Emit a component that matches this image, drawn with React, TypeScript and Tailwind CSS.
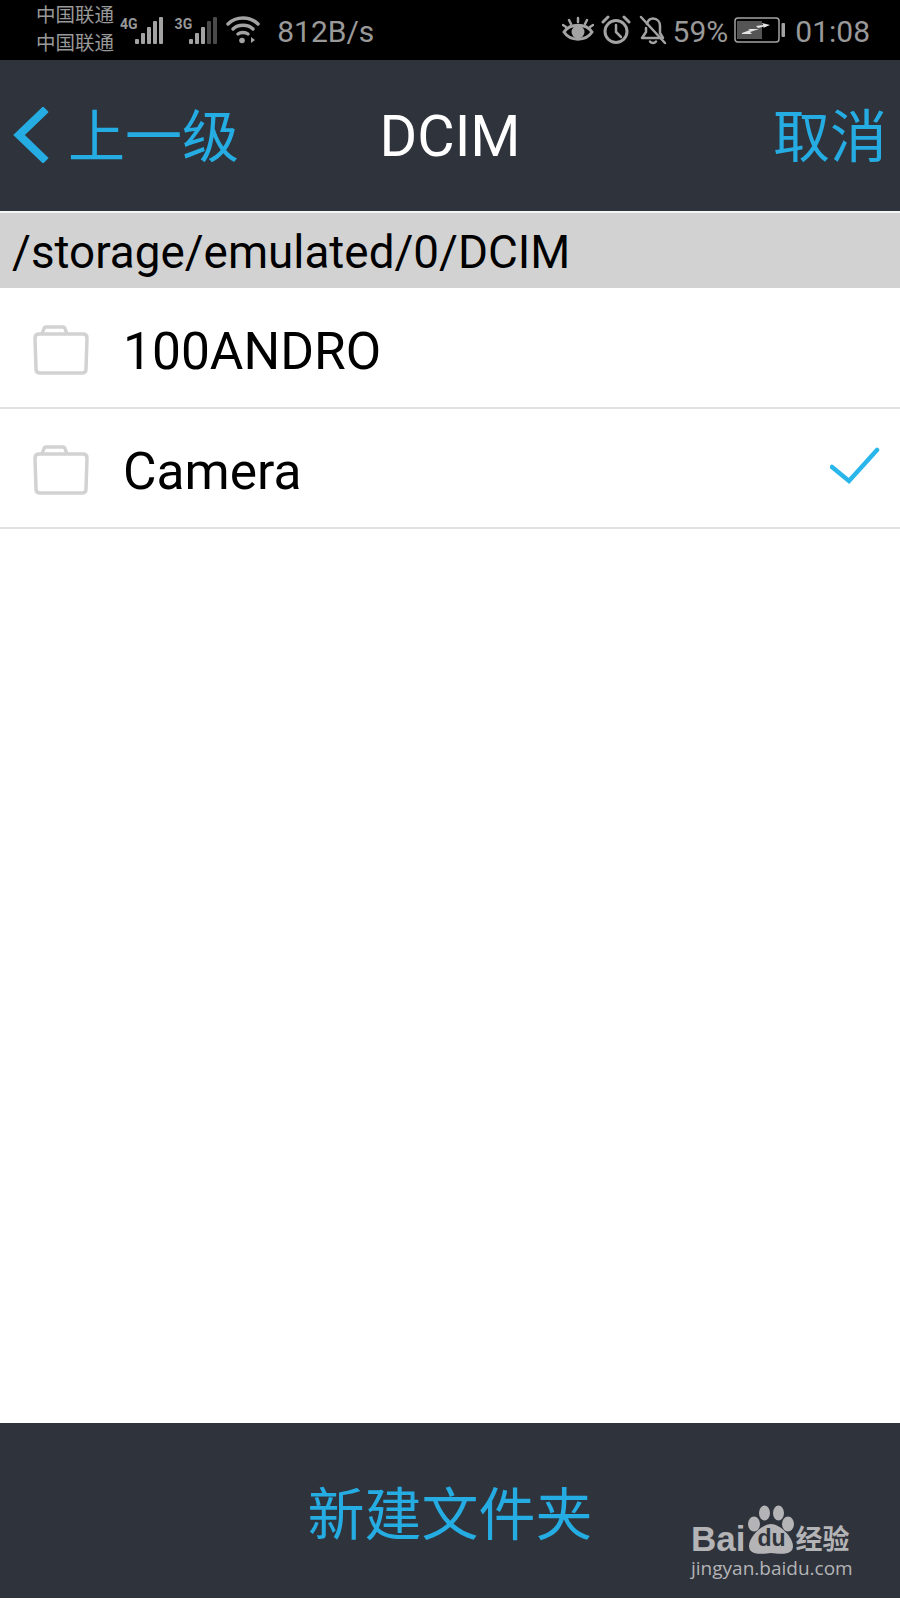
const CJK = "font-['Roboto','Noto_Sans_CJK_SC',sans-serif]"

function SignalBars({ level, className }: { level: number; className?: string }) {
  const heights = [5, 11, 17, 23, 27]
  return (
    <svg width="30" height="28" viewBox="0 0 30 28" className={className}>
      {heights.map((h, i) => (
        <rect
          key={i}
          x={i * 6}
          y={28 - h}
          width="4"
          height={h}
          rx="1"
          fill={i < level ? '#a3a3a3' : '#4a4a4a'}
        />
      ))}
    </svg>
  )
}

function Wifi() {
  return (
    <svg width="34" height="30" viewBox="0 0 34 30" fill="none" stroke="#a3a3a3" strokeWidth="3.500" strokeLinecap="round">
      <path d="M2 9C10 1 24 1 32 9" />
      <path d="M7 14C12 9 22 9 27 14" />
      <path d="M12 19C14.500 17 19.500 17 22 19" />
      <circle cx="16" cy="25.500" r="2.800" fill="#a3a3a3" stroke="none" />
      <path d="M25 22v6l4-3z" fill="#a3a3a3" stroke="none" />
    </svg>
  )
}

function Eye() {
  return (
    <svg width="32" height="28" viewBox="0 0 32 28" fill="none" stroke="#a3a3a3" strokeWidth="3" strokeLinecap="round">
      <path d="M2 16C8 7 24 7 30 16C24 25.500 8 25.500 2 16Z" />
      <circle cx="16" cy="16" r="6.500" fill="#a3a3a3" stroke="none" />
      <path d="M16 2v4M7 4l2 4M25 4l-2 4M1 9l3 2M31 9l-3 2" strokeWidth="2.500" />
    </svg>
  )
}

function Alarm() {
  return (
    <svg width="30" height="30" viewBox="0 0 30 30" fill="none" stroke="#a3a3a3" strokeWidth="3" strokeLinecap="round" strokeLinejoin="round">
      <circle cx="15" cy="16.500" r="11" />
      <path d="M15 10v7l5 5" strokeWidth="2.500" />
      <path d="M2 7l5-5M28 7l-5-5" />
    </svg>
  )
}

function BellOff() {
  return (
    <svg width="28" height="30" viewBox="0 0 28 30" fill="none" stroke="#a3a3a3" strokeWidth="2.500" strokeLinecap="round" strokeLinejoin="round">
      <path d="M8 9C9 5 11 3.500 14 3.500C18.500 3.500 21 7 21 11V18L24 23H3L7 17V13" />
      <path d="M11 26.500C12.500 28.500 15.500 28.500 17 26.500" />
      <path d="M2 2L26 28" />
    </svg>
  )
}

function Battery() {
  return (
    <svg width="52" height="26" viewBox="0 0 52 26" fill="none">
      <rect x="1" y="1" width="44" height="24" rx="3" stroke="#a3a3a3" strokeWidth="1.500" />
      <rect x="3" y="4" width="25" height="18" fill="#555555" />
      <rect x="47.500" y="6" width="3.500" height="14" rx="1" fill="#a3a3a3" />
      <path d="M8 16L16 13L14 12L25 12L16 15L18 17L8 17Z" fill="#e5e5e5" />
      <path d="M22 9L29 8L28 6L36 8L29 11L30 9.500L24 11Z" fill="#e5e5e5" />
    </svg>
  )
}

function Folder() {
  return (
    <svg width="56" height="50" viewBox="0 0 56 50" fill="none" stroke="#d2d2d2" strokeWidth="3.500" strokeLinejoin="round">
      <path d="M9 9L11 3.500C11.300 2.500 12 2 13 2H30C31 2 31.700 2.500 32 3.500L34 9" />
      <path d="M6 9H50C52.500 9 54 10.500 54 13L53 44C53 46.500 51.500 48 49 48H7C4.500 48 3 46.500 3 44L2 13C2 10.500 3.500 9 6 9Z" />
    </svg>
  )
}

function FolderRow({ name, checked }: { name: string; checked?: boolean }) {
  return (
    <div className="flex h-[120px] items-center border-b-2 border-[#e0e2e2] pl-[33px] pr-[20px]">
      <div className="pt-[4px]">
        <Folder />
      </div>
      <span className="ml-[34px] pt-[7px] text-[51.5px] leading-none text-black">{name}</span>
      {checked && (
        <svg width="50" height="42" viewBox="0 0 50 42" fill="none" stroke="#29b6ea" strokeWidth="4.500" strokeLinecap="round" className="ml-auto -mt-[1px]">
          <path d="M2 20L19 34L47 3" />
        </svg>
      )}
    </div>
  )
}

export default function App() {
  return (
    <div className={`relative flex h-[1600px] w-[900px] flex-col overflow-hidden bg-white ${CJK}`}>
      {/* status bar */}
      <div className="flex h-[60px] shrink-0 items-center bg-black pl-[36px] pr-[30px] text-[#999999]">
        <div className="flex flex-col text-[19.5px] leading-[28px]">
          <span>中国联通</span>
          <span>中国联通</span>
        </div>
        <span className="mb-[12px] ml-[6px] text-[14px] font-bold leading-none">4G</span>
        <SignalBars level={5} className="-ml-[3px]" />
        <span className="mb-[12px] ml-[10px] text-[14px] font-bold leading-none">3G</span>
        <SignalBars level={3} className="-ml-[3px]" />
        <div className="ml-[7px]">
          <Wifi />
        </div>
        <span className="ml-[17px] pt-[3px] text-[30px] leading-none">812B/s</span>
        <div className="ml-auto flex items-center">
          <Eye />
          <div className="ml-[7px]">
            <Alarm />
          </div>
          <div className="ml-[8px]">
            <BellOff />
          </div>
          <span className="ml-[6px] pt-[3px] text-[30px] leading-none">59%</span>
          <div className="ml-[6px]">
            <Battery />
          </div>
          <span className="ml-[9px] pt-[3px] text-[30px] leading-none">01:08</span>
        </div>
      </div>

      {/* nav header */}
      <div className="grid h-[151px] shrink-0 grid-cols-[1fr_auto_1fr] items-center bg-[#2f333c] pb-[1px] pl-[13px] pr-[13px] text-[#25ade3]">
        <div className="flex items-center">
          <svg width="36" height="56" viewBox="0 0 36 56" fill="none" stroke="#25ade3" strokeWidth="8" strokeLinecap="square">
            <path d="M30 5L6 28L30 51" />
          </svg>
          <span className="ml-[19px] pt-[4px] text-[57px] leading-none">上一级</span>
        </div>
        <span className="pt-[4px] text-[57.500px] leading-none text-white">DCIM</span>
        <span className="justify-self-end pt-[4px] text-[57px] leading-none">取消</span>
      </div>

      {/* path */}
      <div className="flex h-[77px] shrink-0 items-center border-t-2 border-[#f5f5f5] bg-[#d2d2d2] pl-[12px] pt-[4px] text-[45.8px] leading-none text-black">
        /storage/emulated/0/DCIM
      </div>

      {/* folders */}
      <div className="flex-1 pt-[1px]">
        <FolderRow name="100ANDRO" />
        <FolderRow name="Camera" checked />
      </div>

      {/* footer */}
      <div className="flex h-[177px] shrink-0 items-center justify-center border-b-2 border-white bg-[#2f333c] pt-[9px] text-[57px] leading-none text-[#25ade3]">
        新建文件夹
      </div>

      {/* watermark */}
      <div className="absolute left-[691px] top-[1505px] w-[170px] text-[#b4b4b6]">
        <div className="flex items-end">
          <span className="font-['Liberation_Sans',sans-serif] text-[35px] font-bold leading-[32px]">Bai</span>
          <div className="relative ml-[2px]">
            <svg width="48" height="50" viewBox="0 0 48 50" fill="#b4b4b6">
              <ellipse cx="7" cy="19" rx="6" ry="7.500" />
              <ellipse cx="17.500" cy="8" rx="5.500" ry="7.500" />
              <ellipse cx="31.500" cy="8" rx="5.500" ry="7.500" />
              <ellipse cx="41" cy="19" rx="6" ry="7.500" />
              <path d="M24 19C33 19 46 32 46 41C46 51 32 49 24 48C16 49 2 51 2 41C2 32 15 19 24 19Z" />
            </svg>
            <span className="absolute bottom-[5px] left-0 w-full text-center font-['Liberation_Sans',sans-serif] text-[23px] font-bold leading-none text-[#2f333c]">
              du
            </span>
          </div>
          <span className="text-[27px] font-bold leading-[30px]">经验</span>
        </div>
        <div className="mt-[4px] font-['Open_Sans',sans-serif] text-[19px] leading-none">jingyan.baidu.com</div>
      </div>
    </div>
  )
}
